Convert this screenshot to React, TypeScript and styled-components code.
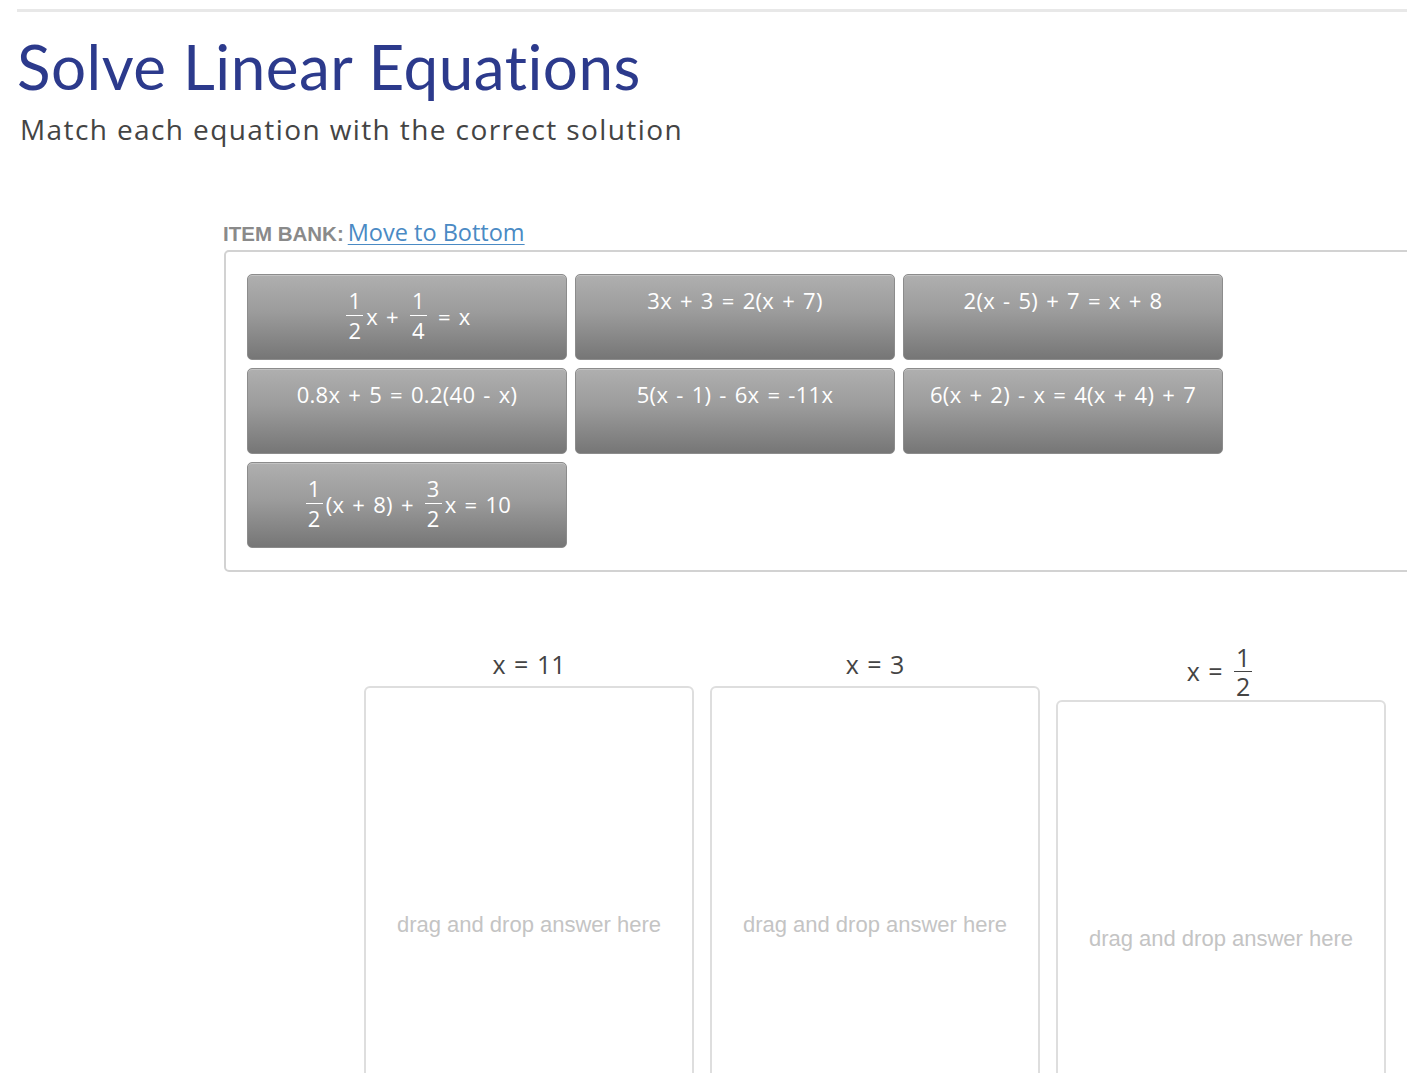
import React from 'react';
import styled, { createGlobalStyle } from 'styled-components';

const GlobalStyle = createGlobalStyle`
  html, body {
    margin: 0;
    padding: 0;
    background: #ffffff;
    overflow-x: hidden;
  }
  body {
    font-family: "Open Sans", "Liberation Sans", sans-serif;
  }
`;

type Part = string | { n: string; d: string };

interface Equation {
  id: string;
  parts: Part[];
}

const equations: Equation[] = [
  { id: 'a', parts: [{ n: '1', d: '2' }, 'x + ', { n: '1', d: '4' }, ' = x'] },
  { id: 'b', parts: ['3x + 3 = 2(x + 7)'] },
  { id: 'c', parts: ['2(x - 5) + 7 = x + 8'] },
  { id: 'd', parts: ['0.8x + 5 = 0.2(40 - x)'] },
  { id: 'e', parts: ['5(x - 1) - 6x = -11x'] },
  { id: 'f', parts: ['6(x + 2) - x = 4(x + 4) + 7'] },
  { id: 'g', parts: [{ n: '1', d: '2' }, '(x + 8) + ', { n: '3', d: '2' }, 'x = 10'] }
];

const solutions: Part[][] = [
  ['x = 11'],
  ['x = 3'],
  ['x = ', { n: '1', d: '2' }]
];

const Page = styled.div`
  width: 1407px;
  padding-top: 9px;
  overflow: hidden;
`;

const TopRule = styled.div`
  height: 3px;
  margin-left: 17px;
  background: #e8e8e8;
`;

const Header = styled.header`
  padding-left: 17px;
`;

const Title = styled.h1`
  margin: 19px 0 0;
  font-family: "Lato", "Open Sans", sans-serif;
  font-weight: 400;
  font-size: 62px;
  line-height: 70px;
  color: #2c3a8c;
  letter-spacing: 0.5px;
`;

const Subtitle = styled.p`
  margin: 8px 0 0 3px;
  font-family: "Open Sans", sans-serif;
  font-size: 28px;
  line-height: 40px;
  color: #444444;
  letter-spacing: 1.4px;
`;

const Bank = styled.section`
  margin: 67px 0 0 223px;
`;

const BankHeading = styled.div`
  display: flex;
  align-items: baseline;
  gap: 4px;
  height: 34px;
`;

const BankLabel = styled.span`
  font-family: "Liberation Sans", Arial, sans-serif;
  font-weight: 700;
  font-size: 20.5px;
  color: #8a8a8a;
`;

const BankLink = styled.a`
  font-family: "Open Sans", sans-serif;
  font-size: 23.5px;
  color: #4a8ac4;
  text-decoration: underline;
  text-underline-offset: 3px;
  text-decoration-thickness: 1px;
  cursor: pointer;
`;

const BankBox = styled.div`
  width: 1300px;
  margin-left: 1px;
  border: 2px solid #d2d2d2;
  border-radius: 5px;
  padding: 22px 0 22px 21px;
  display: grid;
  grid-template-columns: repeat(3, 320px);
  grid-auto-rows: 86px;
  gap: 8px;
`;

const Tile = styled.div`
  box-sizing: border-box;
  border: 1px solid #8c8c8c;
  border-radius: 5px;
  background: linear-gradient(to bottom, #afafaf 0%, #9b9b9b 45%, #767676 100%);
  box-shadow: inset 0 1px 0 rgba(255, 255, 255, 0.25);
  color: #ffffff;
  font-family: "Open Sans", sans-serif;
  font-size: 22px;
  line-height: 26px;
  padding-top: 12px;
  display: flex;
  justify-content: center;
  align-items: flex-start;
  letter-spacing: 0.3px;
  word-spacing: 2px;
  cursor: grab;
`;

const MathLine = styled.span`
  display: inline-flex;
  align-items: center;
  white-space: pre;
`;

const Frac = styled.span<{ $compact?: boolean }>`
  display: inline-flex;
  flex-direction: column;
  align-items: center;
  margin: 0 3px;
  line-height: ${(p) => (p.$compact ? '28px' : '27px')};
`;

const Num = styled.span<{ $compact?: boolean }>`
  padding: ${(p) => (p.$compact ? '0 2px' : '0 2px 1px')};
  border-bottom: 1.5px solid currentColor;
`;

const Den = styled.span<{ $compact?: boolean }>`
  padding: ${(p) => (p.$compact ? '0 2px' : '1px 2px 0')};
`;

const Drops = styled.section`
  margin: 71px 0 0 364px;
  display: grid;
  grid-template-columns: repeat(3, 330px);
  gap: 16px;
  align-items: start;
`;

const DropColumn = styled.div`
  display: flex;
  flex-direction: column;
`;

const DropLabel = styled.div`
  display: flex;
  justify-content: center;
  align-items: center;
  min-height: 43px;
  font-family: "Open Sans", sans-serif;
  font-size: 25px;
  line-height: 43px;
  color: #444444;
  word-spacing: 2px;
`;

const DropZone = styled.div`
  box-sizing: border-box;
  height: 474px;
  border: 2px solid #dedede;
  border-radius: 6px;
  display: flex;
  align-items: center;
  justify-content: center;
`;

const DropHint = styled.span`
  font-family: "Liberation Sans", Arial, sans-serif;
  font-size: 22px;
  color: #c4c4c4;
  padding-top: 4px;
`;

const MathText = ({ parts, compact }: { parts: Part[]; compact?: boolean }) => (
  <MathLine>
    {parts.map((p, i) =>
      typeof p === 'string' ? (
        <span key={i}>{p}</span>
      ) : (
        <Frac key={i} $compact={compact}>
          <Num $compact={compact}>{p.n}</Num>
          <Den $compact={compact}>{p.d}</Den>
        </Frac>
      )
    )}
  </MathLine>
);

const App = () => (
  <>
    <GlobalStyle />
    <Page>
      <TopRule />
      <Header>
        <Title>Solve Linear Equations</Title>
        <Subtitle>Match each equation with the correct solution</Subtitle>
      </Header>
      <Bank>
        <BankHeading>
          <BankLabel>ITEM BANK:</BankLabel>
          <BankLink>Move to Bottom</BankLink>
        </BankHeading>
        <BankBox>
          {equations.map((eq) => (
            <Tile key={eq.id}>
              <MathText parts={eq.parts} />
            </Tile>
          ))}
        </BankBox>
      </Bank>
      <Drops>
        {solutions.map((s, i) => (
          <DropColumn key={i}>
            <DropLabel>
              <MathText parts={s} compact />
            </DropLabel>
            <DropZone>
              <DropHint>drag and drop answer here</DropHint>
            </DropZone>
          </DropColumn>
        ))}
      </Drops>
    </Page>
  </>
);

export default App;
